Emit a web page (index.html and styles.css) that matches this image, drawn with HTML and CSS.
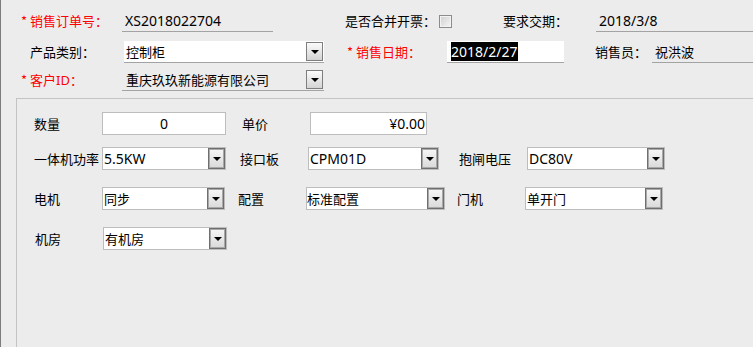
FILE: index.html
```html
<!DOCTYPE html>
<html lang="zh-CN">
<head>
<meta charset="utf-8">
<title>销售订单</title>
<link rel="stylesheet" href="styles.css">
</head>
<body>
<div class="window">
  <div class="header">
    <div class="row r1">
      <span class="lbl req h-l1">* 销售订单号：</span>
      <div class="line f-order"><span class="lat">XS2018022704</span></div>
      <span class="lbl h-merge">是否合并开票：</span>
      <span class="chk"></span>
      <span class="lbl h-due">要求交期：</span>
      <div class="line f-due"><span class="lat">2018/3/8</span></div>
    </div>
    <div class="row r2">
      <span class="lbl h-cat">产品类别：</span>
      <div class="tcombo white f-cat"><span class="val">控制柜</span><span class="tbtn"><i class="tri"></i></span></div>
      <span class="lbl req h-date">* 销售日期：</span>
      <div class="line white f-date"><span class="sel lat">2018/2/27</span></div>
      <span class="lbl h-sales">销售员：</span>
      <div class="line f-sales"><span>祝洪波</span></div>
    </div>
    <div class="row r3">
      <span class="lbl req h-l1">* 客户<span class="lat sm">ID</span>：</span>
      <div class="tcombo f-cust"><span class="val">重庆玖玖新能源有限公司</span><span class="tbtn"><i class="tri"></i></span></div>
    </div>
  </div>

  <div class="panel">
    <div class="prow pa">
      <span class="plbl ml17">数量</span>
      <div class="box w124 center"><span class="lat">0</span></div>
      <span class="plbl ml16">单价</span>
      <div class="box w117 right"><span class="lat">¥0.00</span></div>
    </div>
    <div class="prow pb">
      <span class="plbl ml17">一体机功率</span>
      <div class="combo w124"><span class="val lat">5.5KW</span><span class="btn"><i class="tri"></i></span></div>
      <span class="plbl ml14">接口板</span>
      <div class="combo w131"><span class="val lat">CPM01D</span><span class="btn"><i class="tri"></i></span></div>
      <span class="plbl ml20">抱闸电压</span>
      <div class="combo w138"><span class="val lat">DC80V</span><span class="btn"><i class="tri"></i></span></div>
    </div>
    <div class="prow pc">
      <span class="plbl ml17">电机</span>
      <div class="combo w123"><span class="val">同步</span><span class="btn"><i class="tri"></i></span></div>
      <span class="plbl ml13">配置</span>
      <div class="combo w139"><span class="val tight">标准配置</span><span class="btn"><i class="tri"></i></span></div>
      <span class="plbl ml12">门机</span>
      <div class="combo w138"><span class="val">单开门</span><span class="btn"><i class="tri"></i></span></div>
    </div>
    <div class="prow pd">
      <span class="plbl ml18">机房</span>
      <div class="combo w124"><span class="val">有机房</span><span class="btn"><i class="tri"></i></span></div>
    </div>
  </div>
</div>
</body>
</html>
```

FILE: styles.css
```css
* { box-sizing: border-box; }

html, body {
  margin: 0;
  padding: 0;
  background: #ececec;
}

body {
  font-family: "Noto Sans", "Noto Sans CJK SC", sans-serif;
  font-size: 13px;
  color: #000;
}

.window {
  width: 753px;
  height: 347px;
  border-left: 1px solid #7c7c7c;
  overflow: hidden;
  display: flex;
  flex-direction: column;
}

.lat { font-family: "Noto Sans", sans-serif; font-size: 14px; }
.lat.sm { font-size: 13px; }

.row {
  display: flex;
  align-items: center;
  height: 22px;
}
.r1 { margin-top: 10px; }
.r2 { margin-top: 9px; }
.r3 { margin-top: 6px; }

.lbl {
  white-space: nowrap;
  flex: none;
  line-height: 22px;
  font-family: "Noto Sans CJK SC", sans-serif;
}
.req { color: #ff0000; }

.h-l1 { margin-left: 20px; width: 101px; }
.h-merge { margin-left: 72px; width: 94px; }
.h-due { margin-left: 51px; width: 93px; }
.h-cat { margin-left: 29px; width: 94px; }
.h-date { margin-left: 23px; width: 100px; }
.h-sales { margin-left: 31px; width: 57px; }

.line {
  height: 22px;
  border-bottom: 1px solid #a3a3a3;
  display: flex;
  align-items: center;
  padding-left: 3px;
  white-space: nowrap;
  flex: none;
}
.white { background: #fff; }
.f-order { width: 151px; }
.f-due { flex: 1; }
.f-date { width: 117px; padding-left: 4px; }
.f-sales { flex: 1; font-family: "Noto Sans CJK SC", sans-serif; }

.sel {
  background: #000;
  color: #fff;
  line-height: 19px;
  height: 19px;
  padding-right: 1px;
}

.chk {
  width: 13px;
  height: 13px;
  flex: none;
  border: 1px solid #8c8c8c;
  box-shadow: inset 0 0 0 1px #f3f3f3;
  background: linear-gradient(135deg, #cfcfcf, #f6f6f6);
}

.tcombo {
  height: 22px;
  display: flex;
  align-items: center;
  border-bottom: 1px solid #a3a3a3;
  padding-left: 2px;
  padding-right: 1px;
  flex: none;
  font-family: "Noto Sans CJK SC", sans-serif;
}
.tcombo .val { flex: 1; white-space: nowrap; }
.f-cat { width: 200px; }
.f-cust { width: 202px; padding-left: 4px; }

.tbtn {
  width: 17px;
  height: 19px;
  border: 1px solid #7e7e7e;
  background: linear-gradient(#fbfbfb, #d4d4d4);
  display: flex;
  align-items: center;
  justify-content: center;
  flex: none;
}

.tri {
  display: block;
  width: 0;
  height: 0;
  border-left: 4px solid transparent;
  border-right: 4px solid transparent;
  border-top: 4px solid #000;
  margin-top: 1px;
}

.panel {
  margin-left: 15px;
  margin-top: 7px;
  flex: 1;
  border-top: 1px solid #c3c3c3;
  border-left: 1px solid #c3c3c3;
  padding-top: 13px;
}

.prow {
  display: flex;
  align-items: center;
  height: 23px;
}
.pb { margin-top: 12px; }
.pc { margin-top: 17px; }
.pd { margin-top: 17px; }

.plbl {
  width: 68px;
  flex: none;
  white-space: nowrap;
  font-family: "Noto Sans CJK SC", sans-serif;
  line-height: 23px;
}
.ml12 { margin-left: 12px; }
.ml13 { margin-left: 13px; }
.ml14 { margin-left: 14px; }
.ml16 { margin-left: 16px; }
.ml17 { margin-left: 17px; }
.ml18 { margin-left: 18px; }
.ml20 { margin-left: 20px; }

.w117 { width: 117px; }
.w123 { width: 123px; }
.w124 { width: 124px; }
.w131 { width: 131px; }
.w138 { width: 138px; }
.w139 { width: 139px; }

.box {
  height: 23px;
  flex: none;
  background: #fff;
  border: 1px solid #bdbdbd;
  display: flex;
  align-items: center;
}
.center { justify-content: center; }
.right { justify-content: flex-end; padding-right: 1px; }

.combo {
  height: 23px;
  flex: none;
  background: #fff;
  border: 1px solid #bdbdbd;
  display: flex;
  align-items: center;
  padding-left: 1px;
  font-family: "Noto Sans CJK SC", sans-serif;
}
.combo .val { flex: 1; white-space: nowrap; }
.combo .val.lat { font-family: "Noto Sans", sans-serif; }
.combo .tight { margin-left: -1px; }

.btn {
  width: 17px;
  height: 21px;
  flex: none;
  border: 1px solid #6f6f6f;
  box-shadow: inset 0 0 0 1px #a9a9a9;
  background: linear-gradient(#f7f7f7, #d9d9d9);
  display: flex;
  align-items: center;
  justify-content: center;
}
```
